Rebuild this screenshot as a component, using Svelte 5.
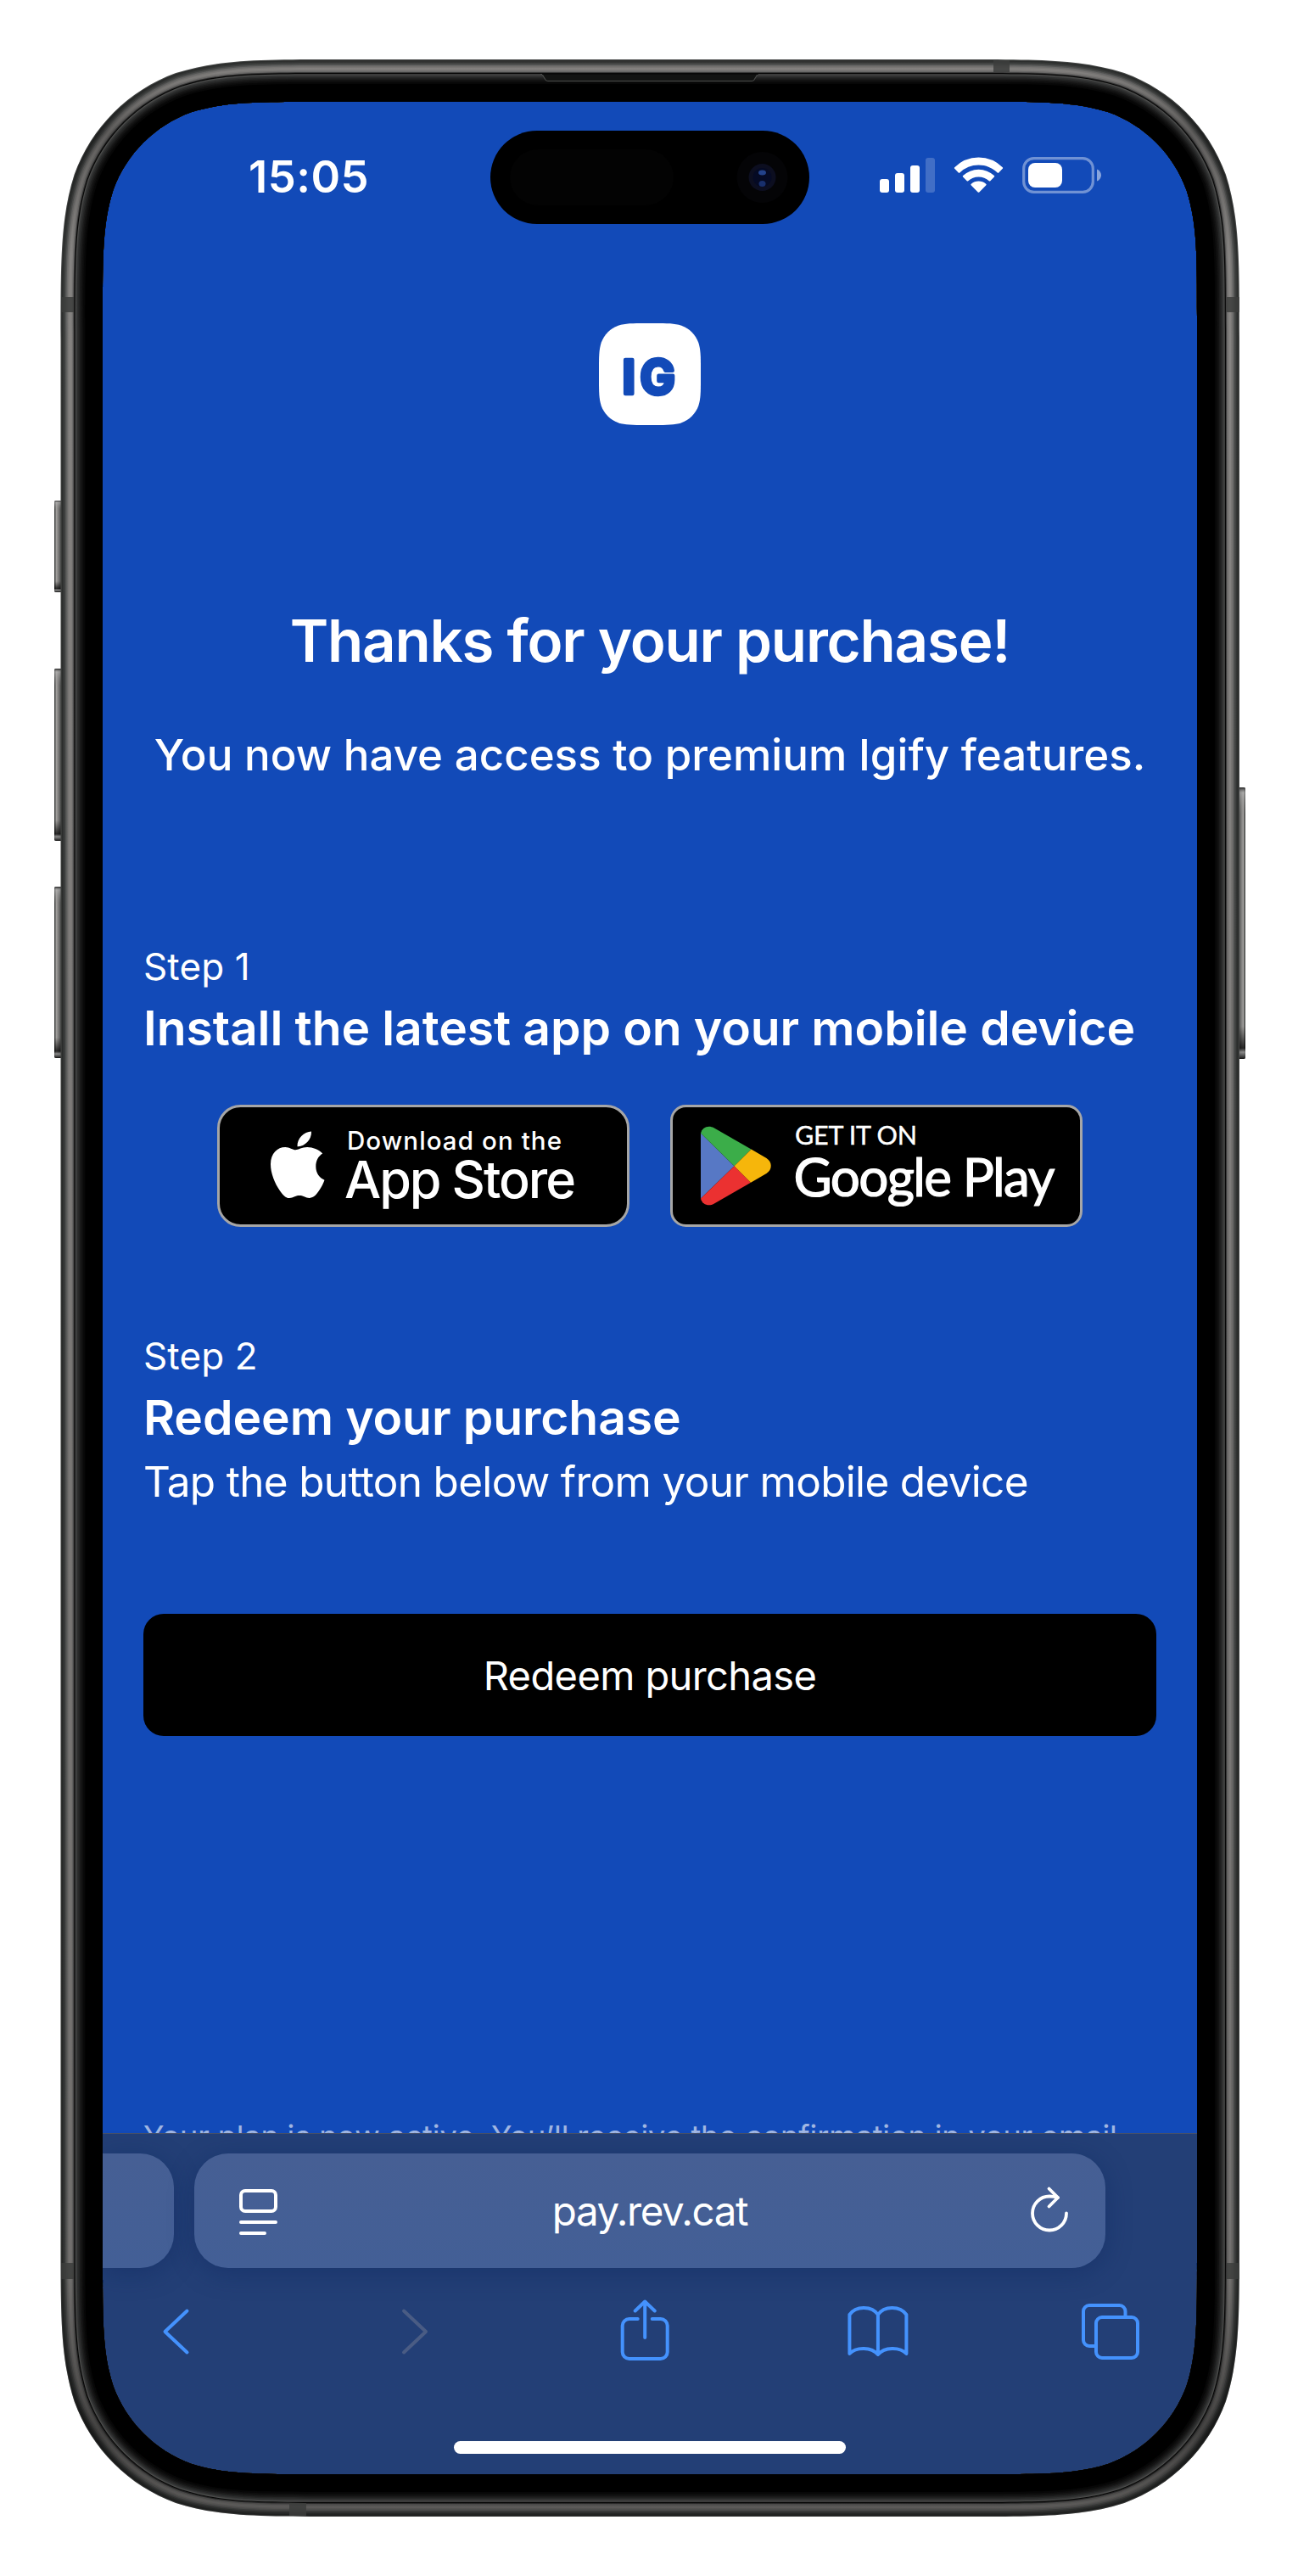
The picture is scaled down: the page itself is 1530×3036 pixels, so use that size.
<script>
  // Continuous-curvature rounded rectangle, as an SVG path.
  function squircle(x, y, w, h, r) {
    const X = x + w;
    const Y = y + h;
    const a = 1.528665 * r, b = 1.08849296 * r, c = 0.86840694 * r, d = 0.63149379 * r;
    const e = 0.07491139 * r, f = 0.37282383 * r, g = 0.16905956 * r;
    return [
      `M${x + a} ${y}H${X - a}`,
      `C${X - b} ${y} ${X - c} ${y} ${X - d} ${y + e}`,
      `C${X - f} ${y + g} ${X - g} ${y + f} ${X - e} ${y + d}`,
      `C${X} ${y + c} ${X} ${y + b} ${X} ${y + a}V${Y - a}`,
      `C${X} ${Y - b} ${X} ${Y - c} ${X - e} ${Y - d}`,
      `C${X - g} ${Y - f} ${X - f} ${Y - g} ${X - d} ${Y - e}`,
      `C${X - c} ${Y} ${X - b} ${Y} ${X - a} ${Y}H${x + a}`,
      `C${x + b} ${Y} ${x + c} ${Y} ${x + d} ${Y - e}`,
      `C${x + f} ${Y - g} ${x + g} ${Y - f} ${x + e} ${Y - d}`,
      `C${x} ${Y - c} ${x} ${Y - b} ${x} ${Y - a}V${y + a}`,
      `C${x} ${y + b} ${x} ${y + c} ${x + e} ${y + d}`,
      `C${x + g} ${y + f} ${x + f} ${y + g} ${x + d} ${y + e}`,
      `C${x + c} ${y} ${x + b} ${y} ${x + a} ${y}Z`
    ].join('');
  }

  const OUTER = { x: 71.5, y: 70, w: 1389.5, h: 2896, r: 215 };
  const inset = (i) => squircle(OUTER.x + i, OUTER.y + i, OUTER.w - 2 * i, OUTER.h - 2 * i, OUTER.r - i);
  const hole = squircle(121, 120, 1290, 2796, 165);

  // Metal band and bezel, from the outer edge inwards.
  const layers = [
    [0, '#4a4c4b'], [1, '#2c2e2d'], [2.5, '#353736'], [4, '#414342'], [5.5, '#555655'],
    [7, '#6c6c6b'], [8.5, '#7c7a78'], [10, '#878583'], [12, '#817f7d'], [13.5, '#6e6d6c'],
    [15, '#3b3b3b'], [16, '#060606'], [17.2, '#4a4b4a'], [18.4, '#383939'], [19.5, '#2e2f2f'],
    [21, '#242525'], [22.5, '#1b1b1b'], [24, '#131313'], [25.5, '#0d0d0d'], [27, '#070707'], [29, '#000']
  ].map(([i, color]) => ({ d: inset(i) + hole, color }));

  const band = inset(0) + inset(16);

  const leftKeys = [[590, 108], [788, 203], [1045, 202]];
  const seams = [
    [72, 350, 15, 18], [1446, 350, 15, 18], [72, 2667, 15, 19], [1446, 2667, 15, 19],
    [1171, 71, 19, 14], [341, 2950, 20, 15]
  ];
</script>

<main class="stage">
  <div class="screen">
    <header class="status">
      <span class="time">15:05</span>
      <svg class="indicators" viewBox="1035 180 270 52" aria-hidden="true">
        <g fill="#fff">
          <rect x="1037" y="211" width="11" height="16" rx="3" />
          <rect x="1055" y="204" width="11" height="23" rx="3" />
          <rect x="1073" y="195" width="11" height="32" rx="3" />
          <rect x="1091" y="186" width="11" height="41" rx="3" opacity=".2" />
          <path d="M1153.5 194.500c8.600 0 16.400 3.400 22.200 9a1 1 0 0 0 1.500 0l4.600-4.700a1.100 1.100 0 0 0 0-1.600A41 41 0 0 0 1153.500 185.500a41 41 0 0 0-28.300 11.700 1.100 1.100 0 0 0 0 1.600l4.600 4.700a1 1 0 0 0 1.500 0 32 32 0 0 1 22.200-9z" />
          <path d="M1153.500 208.500c4.700 0 9 1.800 12.300 4.800.5.400 1.100.4 1.500 0l4.600-4.700a1.100 1.100 0 0 0 0-1.600 27 27 0 0 0-36.800 0 1.100 1.100 0 0 0 0 1.600l4.600 4.700c.4.400 1 .4 1.500 0a18 18 0 0 1 12.300-4.800z" />
          <path d="M1162.200 218.400a1.100 1.100 0 0 0 0-1.700 13.500 13.500 0 0 0-17.400 0 1.100 1.100 0 0 0 0 1.700l7.900 8a1.100 1.100 0 0 0 1.600 0z" />
        </g>
        <rect x="1206.700" y="186.700" width="81.600" height="39.600" rx="12" fill="none" stroke="#fff" stroke-opacity=".4" stroke-width="3.200" />
        <path d="M1293 199.500c3 1 5 3.800 5 7s-2 6-5 7z" fill="#fff" fill-opacity=".5" />
        <rect x="1212" y="192" width="40" height="29" rx="8" fill="#fff" />
      </svg>
    </header>

    <section class="page">
      <svg class="logo" viewBox="0 0 120 120" role="img" aria-label="IG">
        <path d={squircle(0, 0, 120, 120, 36)} fill="#fff" />
        <text class="logo-text" y="82.500"><tspan x="27.500">I</tspan><tspan x="48.500">G</tspan></text>
      </svg>

      <h1>Thanks for your purchase!</h1>
      <p class="lead">You now have access to premium Igify features.</p>

      <div class="step one">
        <p class="label">Step 1</p>
        <h2 class="install">Install the latest app on your mobile device</h2>
        <div class="badges">
          <svg class="badge" viewBox="256 1302 486 144" role="img" aria-label="Download on the App Store">
            <rect x="257.500" y="1303.500" width="483" height="141" rx="26" fill="#000" stroke="#a6a6a6" stroke-width="3" />
            <path fill="#fff" d="M367 1333.500c.3 5-1.700 9.300-4.800 12.600-3.200 3.400-7.300 5.500-11.700 5.100-.3-4.600 1.800-9 4.700-12.200 3.200-3.300 7.700-5.300 11.800-5.500zM380.200 1359.600c-5.300 3.400-8 8.600-7.900 15.500.1 7.600 4 13.100 10.200 15.700-1.300 4-3.600 8.400-6.600 12.800-2.900 4.100-6.100 8.200-11 8.300-4.800.1-6.400-2.900-11.900-2.900s-7.300 2.800-11.800 3c-4.700.2-8.300-4.500-11.200-8.600-6-8.700-11.100-21-11-31.500.1-12.700 8.200-19.800 17.100-19.900 4.800-.1 9.200 3.300 12.300 3.300 3 0 8-3.300 13.900-3.200 6.300.2 13.400 2.500 17.900 7.500z" />
            <text class="small" x="409" y="1355" textLength="253">Download on the</text>
            <text class="big" x="406" y="1411.500" textLength="273">App Store</text>
          </svg>
          <svg class="badge" viewBox="790 1302 486 144" role="img" aria-label="Get it on Google Play">
            <rect x="791.500" y="1303.500" width="483" height="141" rx="17" fill="#000" stroke="#a6a6a6" stroke-width="3" />
            <path fill="#5778c5" d="M826 1335.500L865.500 1374.200 826 1412.500z" />
            <path fill="#3bad49" d="M826 1335.500c1.500-6.800 9-10 15.500-6.300L885.500 1354.500 865.500 1374.200z" />
            <path fill="#eb3131" d="M826 1412.500c1.500 7 9 9.800 15.500 6.300L885 1393.800 865.500 1374.200z" />
            <path fill="#f6b60b" d="M885.500 1354.500L903.500 1365c7 4.500 7 13.500 0 18L885 1393.800 865.500 1374.200z" />
            <text class="g-small" x="937" y="1349" textLength="144">GET IT ON</text>
            <text class="g-big" x="935.500" y="1410" textLength="308">Google Play</text>
          </svg>
        </div>
      </div>

      <div class="step two">
        <p class="label">Step 2</p>
        <h2 class="redeem">Redeem your purchase</h2>
        <p class="hint">Tap the button below from your mobile device</p>
      </div>

      <button class="cta">Redeem purchase</button>
      <p class="note">Your plan is now active. You’ll receive the confirmation in your email.</p>
    </section>

    <footer class="browser">
      <div class="tabs">
        <div class="stub"></div>
        <div class="address">
          <svg class="reader" viewBox="280 2575 50 60" aria-hidden="true">
            <g fill="none" stroke="#fff" stroke-width="4" stroke-linecap="round">
              <rect x="284" y="2581" width="41" height="24" rx="5" />
              <path d="M284 2618h41M284 2631h28" />
            </g>
          </svg>
          <span class="url">pay.rev.cat</span>
          <svg class="reload" viewBox="1212 2572 52 62" aria-hidden="true">
            <g fill="none" stroke="#fff" stroke-width="3.800" stroke-linecap="round" stroke-linejoin="round">
              <path d="M1257 2607.500a20 20 0 1 1-20-20q5.500 0 10 1.500" />
              <path d="M1236.500 2578.500l10.500 10.500-10.500 10.500" />
            </g>
          </svg>
        </div>
      </div>
      <nav class="tools">
        <svg viewBox="167.500 2700 80 90" aria-hidden="true"><path class="tool" d="M220 2723.500L194 2748l26 24.500" /></svg>
        <svg viewBox="443 2700 80 90" aria-hidden="true"><path class="tool off" d="M476 2723.500L502 2748l-26 24.500" /></svg>
        <svg viewBox="718.300 2700 80 90" aria-hidden="true">
          <path class="tool" d="M752 2733h-10a8 8 0 0 0-8 8v31a8 8 0 0 0 8 8h37a8 8 0 0 0 8-8v-31a8 8 0 0 0-8-8h-10M760.500 2755v-41M749 2723.500l11.500-11 11.500 11" />
        </svg>
        <svg viewBox="993.600 2700 80 90" aria-hidden="true">
          <path class="tool" d="M1034.500 2728c-7-10.500-26-11-33.500 0v46c8-8.500 26-8 33.500 1 7.500-9 25.500-9.500 33.500-1v-46c-7.500-11-26.500-10.500-33.500 0V2774" />
        </svg>
        <svg viewBox="1269 2700 80 90" aria-hidden="true">
          <path class="tool" d="M1326.500 2730v-6a7 7 0 0 0-7-7h-35.500a7 7 0 0 0-7 7v34a7 7 0 0 0 7 7h7.500" />
          <rect class="tool" x="1292" y="2731" width="49" height="48" rx="7" />
        </svg>
      </nav>
      <div class="home"></div>
    </footer>
  </div>

  <svg class="device" viewBox="0 0 1530 3036" aria-hidden="true">
    <defs>
      <linearGradient id="shade" x1="0" y1="70" x2="0" y2="2966" gradientUnits="userSpaceOnUse">
        <stop offset="0" stop-opacity="0" />
        <stop offset=".03" stop-opacity=".3" />
        <stop offset=".08" stop-opacity="0" />
        <stop offset=".9" stop-opacity=".15" />
        <stop offset=".965" stop-opacity=".5" />
        <stop offset="1" stop-opacity=".3" />
      </linearGradient>
      <linearGradient id="key">
        <stop offset="0" stop-color="#303231" />
        <stop offset=".25" stop-color="#a09e9c" />
        <stop offset=".6" stop-color="#6a6a69" />
        <stop offset="1" stop-color="#1e201f" />
      </linearGradient>
      <linearGradient id="key-end" x1="0" y1="0" x2="0" y2="1">
        <stop offset="0" stop-color="#222" />
        <stop offset=".02" stop-color="#bbb" stop-opacity=".5" />
        <stop offset=".1" stop-color="#888" stop-opacity="0" />
        <stop offset=".88" stop-opacity="0" />
        <stop offset=".96" stop-opacity=".75" />
        <stop offset=".975" stop-color="#888" stop-opacity=".8" />
        <stop offset="1" stop-color="#111" />
      </linearGradient>
    </defs>

    {#each leftKeys as [y, h]}
      <rect x="64" {y} width="10" height={h} rx="2" fill="url(#key)" />
      <rect x="64" {y} width="10" height={h} rx="2" fill="url(#key-end)" />
    {/each}
    <g transform="matrix(-1 0 0 1 1468 0)">
      <rect y="928" width="10" height="320" rx="2" fill="url(#key)" />
      <rect y="928" width="10" height="320" rx="2" fill="url(#key-end)" />
    </g>

    {#each layers as { d, color }}
      <path {d} fill={color} fill-rule="evenodd" />
    {/each}
    <path d={band} fill="url(#shade)" fill-rule="evenodd" />

    {#each seams as [x, y, width, height]}
      <rect {x} {y} {width} {height} fill="#3c3d3c" fill-opacity=".85" />
    {/each}

    <path d="M637 87.500h2l4 6.500q1 1.500 3 1.500h240q2 0 3-1.500l4-6.500h2" fill="#121312" stroke="#4a4b4a" stroke-width="1.200" />
    <path d="M639 86.500h255v1.500h-255z" fill="#0b0b0b" />

    <rect x="578" y="154" width="376" height="110" rx="55" />
    <rect x="601" y="176" width="193" height="66" rx="33" fill="#030303" />
    <circle cx="898.500" cy="209" r="30" fill="#040406" />
    <circle cx="898.500" cy="209" r="16" fill="#0c0e20" />
    <circle cx="898.500" cy="209" r="11" fill="#050a24" />
    <ellipse cx="898.500" cy="203.500" rx="4.500" ry="3" fill="#23428a" />
    <ellipse cx="898.500" cy="216.500" rx="4" ry="3.500" fill="#182f6c" />
  </svg>
</main>

<style>
  :global(body) { margin: 0; background: #fff; }

  .stage {
    position: relative;
    box-sizing: border-box;
    width: 1530px;
    height: 3036px;
    padding: 120px 119px 120px 121px;
    font-family: Inter, "Liberation Sans", sans-serif;
    color: #fff;
  }
  .device { position: absolute; inset: 0; width: 1530px; height: 3036px; pointer-events: none; }

  .screen {
    display: flex;
    flex-direction: column;
    width: 1290px;
    height: 2796px;
    overflow: hidden;
    border-radius: 150px;
    background: #124ab8;
  }
  h1, h2, p { margin: 0; white-space: nowrap; }

  .status {
    flex: none;
    display: flex;
    justify-content: space-between;
    align-items: flex-start;
    height: 261px;
    box-sizing: border-box;
    padding: 60px 106px 0 172px;
  }
  .time { margin-top: -3px; font-size: 52.500px; line-height: 62px; font-weight: 600; letter-spacing: .5px; }
  .indicators { width: 270px; height: 52px; }

  .page {
    flex: none;
    display: flex;
    flex-direction: column;
    height: 2133px;
    box-sizing: border-box;
    padding: 0 48px;
    overflow: hidden;
  }
  .logo { flex: none; width: 120px; height: 120px; align-self: center; }
  .logo-text {
    font-size: 55px;
    font-weight: 700;
    fill: #124ab8;
    stroke: #124ab8;
    stroke-width: 4.500px;
    stroke-linejoin: round;
  }

  h1 { margin-top: 210px; text-align: center; font-size: 69px; line-height: 88px; font-weight: 600; letter-spacing: -1.200px; }
  .lead { margin-top: 57px; text-align: center; font-size: 51px; line-height: 68px; font-weight: 500; letter-spacing: .040px; }

  .step { display: flex; flex-direction: column; }
  .one { margin-top: 187px; }
  .two { margin-top: 124px; }
  .label { font-size: 44px; line-height: 56px; letter-spacing: .1px; }
  h2 { margin-top: 8px; font-size: 57px; line-height: 74px; font-weight: 600; letter-spacing: -.100px; }
  .hint { margin-top: 6px; font-size: 49.500px; line-height: 64px; letter-spacing: -.680px; }

  .badges { display: flex; justify-content: center; gap: 48px; margin-top: 53px; }
  .badge { width: 486px; height: 144px; }
  .badge text { fill: #fff; }
  .small { font-size: 29.500px; font-weight: 500; }
  .big { font-size: 61px; font-weight: 500; }
  .g-small { font-family: Lato, sans-serif; font-size: 30.500px; stroke: #fff; stroke-width: .4px; }
  .g-big { font-family: Lato, sans-serif; font-size: 62px; stroke: #fff; stroke-width: 1.200px; }

  .cta {
    flex: none;
    height: 144px;
    margin-top: 124px;
    padding: 2px 0 0;
    border: 0;
    border-radius: 24px;
    background: #000;
    color: #fff;
    font: 400 47px/60px Inter, sans-serif;
    letter-spacing: -.600px;
  }
  .note { margin-top: 448px; font-size: 36px; line-height: 48px; letter-spacing: -.100px; opacity: .6; }

  .browser {
    flex: none;
    display: flex;
    flex-direction: column;
    height: 402px;
    box-sizing: border-box;
    border-top: 1.500px solid #45506a;
    background: #233f76;
  }
  .tabs { display: flex; gap: 24px; margin-top: 23px; height: 135px; }
  .stub, .address { background: linear-gradient(#465f94, #435f96); box-shadow: 0 6px 30px rgba(10, 35, 90, .35); }
  .stub { width: 84px; border-radius: 0 40px 40px 0; }
  .address {
    display: flex;
    align-items: center;
    justify-content: space-between;
    width: 1074px;
    box-sizing: border-box;
    padding: 0 39px 0 51px;
    border-radius: 40px;
  }
  .reader { width: 50px; height: 60px; }
  .reload { width: 52px; height: 62px; margin-top: -4px; }
  .url { margin-right: 10px; font-size: 47.500px; line-height: 60px; letter-spacing: -1.400px; }

  .tools { display: flex; justify-content: space-between; margin-top: 27px; padding: 0 62px 0 46.500px; }
  .tools svg { width: 80px; height: 90px; }
  .tool { fill: none; stroke: #4492fd; stroke-width: 4; stroke-linecap: round; stroke-linejoin: round; }
  .off { stroke: #4a5c84; }

  .home { align-self: center; width: 462px; height: 15px; margin-top: 87px; border-radius: 8px; background: #fff; }
</style>
